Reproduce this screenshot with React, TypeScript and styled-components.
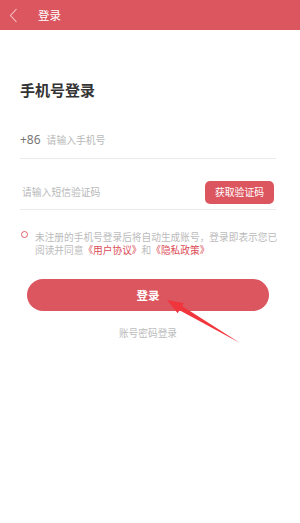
import React from "react";
import styled, { createGlobalStyle } from "styled-components";

const RED = "#dc5660";

const Global = createGlobalStyle`
  html, body {
    margin: 0;
    padding: 0;
    background: #fff;
    font-family: "Noto Sans CJK SC", "Noto Sans", sans-serif;
  }
`;

const Page = styled.div`
  position: relative;
  width: 300px;
  height: 523px;
  background: #fff;
  overflow: hidden;
`;

const Header = styled.div`
  height: 30px;
  background: ${RED};
  display: flex;
  align-items: center;
  padding-left: 9px;
  box-sizing: border-box;
`;

const HeaderTitle = styled.span`
  margin-left: 20px;
  color: #fff;
  font-size: 11.5px;
  line-height: 14px;
`;

const Content = styled.div`
  padding: 0 24px 0 20px;
`;

const Title = styled.h1`
  margin: 50px 0 0;
  font-size: 15px;
  line-height: 20px;
  font-weight: 700;
  color: #333;
`;

const Field = styled.div<{ $tall?: boolean }>`
  display: flex;
  align-items: center;
  border-bottom: 1px solid #ececec;
  box-sizing: border-box;
  height: ${(p) => (p.$tall ? "51px" : "38px")};
  padding: ${(p) => (p.$tall ? "16px 2px 0 2px" : "0")};
  margin-top: ${(p) => (p.$tall ? "0" : "21px")};
`;

const Prefix = styled.span`
  font-size: 12px;
  font-weight: 400;
  color: #777;
  font-family: "Noto Sans", sans-serif;
  margin-right: 6px;
`;

const Placeholder = styled.span`
  flex: 1;
  font-size: 9.8px;
  color: #b8b8b8;
`;

const CodeButton = styled.div`
  width: 69px;
  height: 23px;
  border-radius: 5px;
  background: ${RED};
  color: #fff;
  font-size: 9.8px;
  display: flex;
  align-items: center;
  justify-content: center;
`;

const Agreement = styled.div`
  display: flex;
  margin-top: 21px;
`;

const Radio = styled.span`
  flex: none;
  width: 5px;
  height: 5px;
  border: 1px solid #e0606a;
  border-radius: 50%;
  margin: 0 7px 0 1px;
`;

const AgreeText = styled.div`
  font-size: 9.7px;
  line-height: 12.5px;
  color: #bbb;
  white-space: nowrap;
`;

const Line = styled.span`
  display: block;
`;

const Link = styled.span`
  color: #dc4c57;
`;

const LoginButton = styled.div`
  margin: 23px 7px 0;
  height: 32px;
  border-radius: 16px;
  background: ${RED};
  color: #fff;
  font-size: 11.5px;
  font-weight: 700;
  display: flex;
  align-items: center;
  justify-content: center;
`;

const AltLogin = styled.div`
  margin: 15px 7px 0;
  text-align: center;
  font-size: 9.7px;
  line-height: 14px;
  color: #bbb;
`;

const Arrow = styled.svg`
  position: absolute;
  left: 0;
  top: 0;
  pointer-events: none;
`;

export default function App() {
  return (
    <Page>
      <Global />
      <Header>
        <svg width="9" height="15" viewBox="0 0 9 15">
          <path d="M7.5 1 L1.5 7.5 L7.5 14" fill="none" stroke="#f6c3c7" strokeWidth="1.1" />
        </svg>
        <HeaderTitle>登录</HeaderTitle>
      </Header>
      <Content>
        <Title>手机号登录</Title>
        <Field>
          <Prefix>+86</Prefix>
          <Placeholder>请输入手机号</Placeholder>
        </Field>
        <Field $tall>
          <Placeholder>请输入短信验证码</Placeholder>
          <CodeButton>获取验证码</CodeButton>
        </Field>
        <Agreement>
          <Radio />
          <AgreeText>
            <Line>未注册的手机号登录后将自动生成账号，登录即表示您已</Line>
            <Line>
              阅读并同意<Link>《用户协议》</Link>和<Link>《隐私政策》</Link>
            </Line>
          </AgreeText>
        </Agreement>
        <LoginButton>登录</LoginButton>
        <AltLogin>账号密码登录</AltLogin>
      </Content>
      <Arrow width="300" height="523" viewBox="0 0 300 523">
        <polygon
          points="167,300 183.8,302.9 182.1,305.9 240,343 179.5,310.3 177.7,313.3"
          fill="#f0363c"
        />
      </Arrow>
    </Page>
  );
}
